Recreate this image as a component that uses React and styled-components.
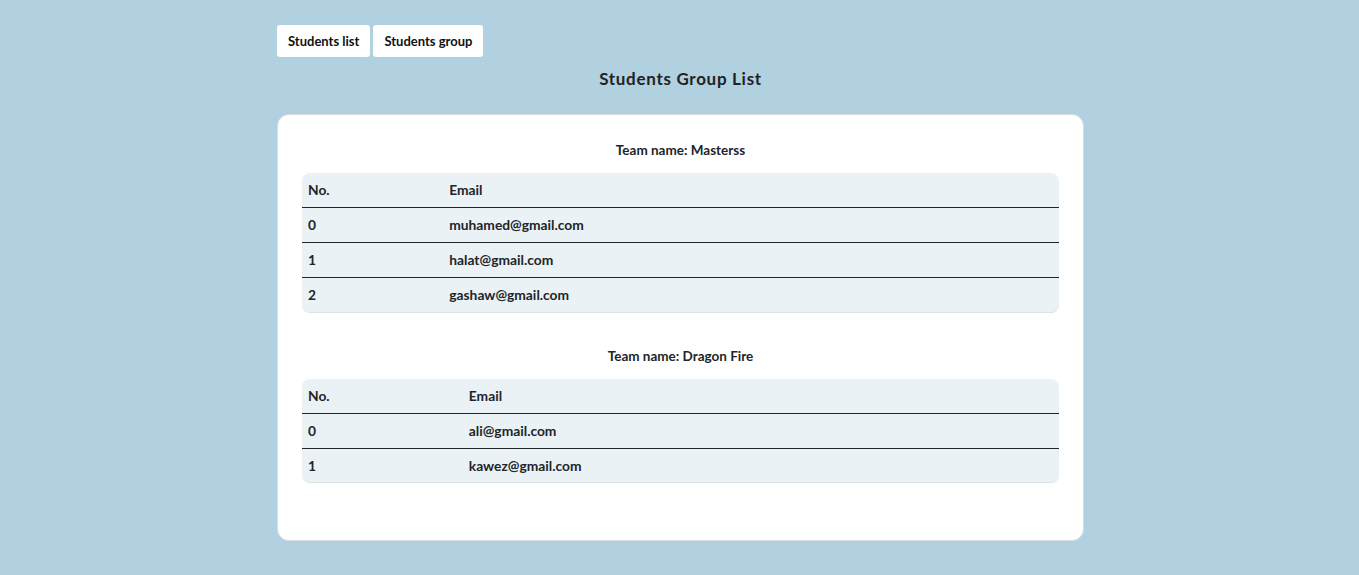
import React from "react";
import styled, { createGlobalStyle } from "styled-components";

const Global = createGlobalStyle`
  html, body { margin: 0; padding: 0; }
  body {
    background: #b1d0e0;
    font-family: Lato, "Noto Sans", sans-serif;
    color: #212529;
  }
`;

const Page = styled.div`
  width: 807px;
  margin-left: calc(50% - 402.5px);
  padding-top: 25px;
  padding-bottom: 34px;
`;

const Tabs = styled.div`
  display: flex;
  gap: 3px;
`;

const TabButton = styled.button`
  height: 32px;
  padding: 0 11px;
  border: none;
  border-radius: 3px;
  background: #ffffff;
  font-family: inherit;
  font-size: 13px;
  font-weight: 700;
  color: #111;
  cursor: pointer;
`;

const Title = styled.h2`
  margin: 10px 0 0;
  text-align: center;
  font-size: 17px;
  line-height: 23px;
  font-weight: 700;
  letter-spacing: 0.7px;
  color: #222;
`;

const Card = styled.div`
  margin-top: 24px;
  background: #fff;
  border: 1px solid #d9dde0;
  border-radius: 12px;
  padding: 25px 24px 24px;
`;

const Section = styled.section`
  margin-bottom: 33px;
`;

const TeamName = styled.h3`
  margin: 0 0 13px;
  text-align: center;
  font-size: 13.5px;
  line-height: 20px;
  font-weight: 700;
`;

const Table = styled.table`
  width: 100%;
  border-collapse: separate;
  border-spacing: 0;
  background: #eaf2f6;
  border-radius: 8px;
  border-bottom: 1px solid #dde2e5;
  font-size: 13.8px;
  line-height: 18px;
  font-weight: 700;
`;

const Th = styled.th`
  text-align: left;
  padding: 0 6px;
  height: 34px;
  font-weight: 700;
  border-bottom: 1px solid #212529;
`;

const Td = styled.td`
  padding: 0 6px;
  height: 33.9px;
  border-bottom: ${(p) => (p.$last ? "none" : "1px solid #212529")};
`;

const teams = [
  {
    name: "Masterss",
    emails: ["muhamed@gmail.com", "halat@gmail.com", "gashaw@gmail.com"],
  },
  { name: "Dragon Fire", emails: ["ali@gmail.com", "kawez@gmail.com"] },
];

export default function App() {
  return (
    <>
      <Global />
      <Page>
        <Tabs>
          <TabButton>Students list</TabButton>
          <TabButton>Students group</TabButton>
        </Tabs>
        <Title>Students Group List</Title>
        <Card>
          {teams.map((t) => (
            <Section key={t.name}>
              <TeamName>Team name: {t.name}</TeamName>
              <Table>
                <thead>
                  <tr>
                    <Th>No.</Th>
                    <Th>Email</Th>
                  </tr>
                </thead>
                <tbody>
                  {t.emails.map((e, i) => {
                    const last = i === t.emails.length - 1;
                    return (
                      <tr key={e}>
                        <Td $last={last}>{i}</Td>
                        <Td $last={last}>{e}</Td>
                      </tr>
                    );
                  })}
                </tbody>
              </Table>
            </Section>
          ))}
        </Card>
      </Page>
    </>
  );
}
